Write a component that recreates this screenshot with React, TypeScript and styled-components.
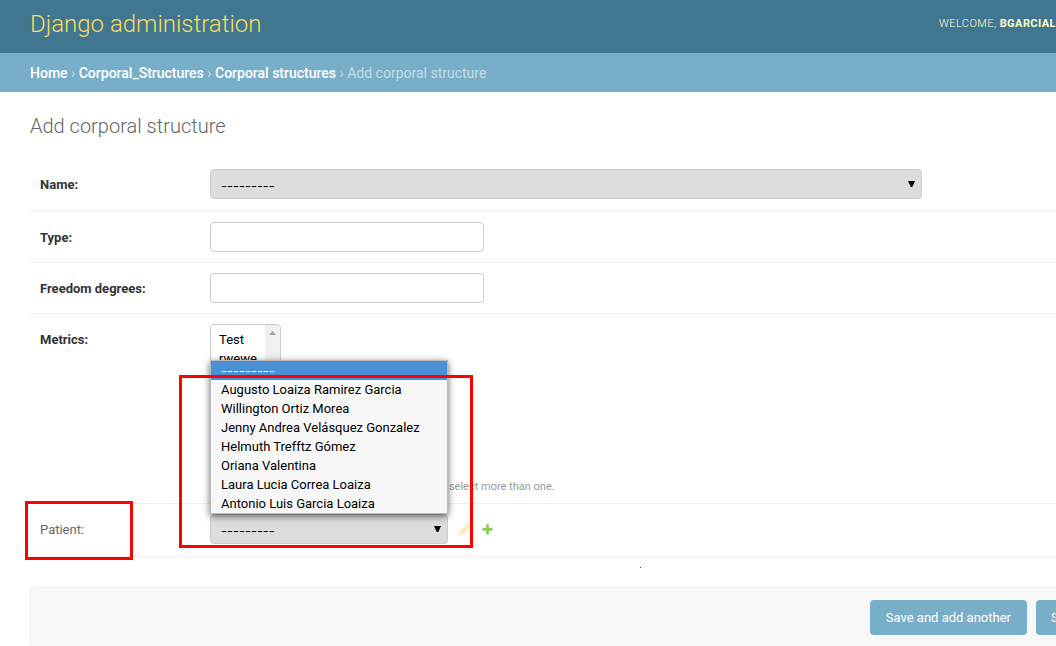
import React from 'react';
import styled, { createGlobalStyle, css } from 'styled-components';

const GlobalStyle = createGlobalStyle`
  *, *::before, *::after { box-sizing: border-box; }
  body {
    margin: 0;
    background: #fff;
    color: #333;
    font-family: Roboto, "Liberation Sans", sans-serif;
    font-size: 13px;
    line-height: 20px;
  }
`;

const Page = styled.div`
  overflow: hidden;
`;

const Header = styled.header`
  display: flex;
  align-items: center;
  justify-content: space-between;
  height: 53px;
  padding: 0 0 6px 30px;
  background: #417690;
  color: #ffc;
`;

const SiteName = styled.a`
  color: #f5dd5d;
  font-size: 24px;
  font-weight: 300;
  line-height: 28px;
  text-decoration: none;
`;

const UserTools = styled.div`
  font-size: 11px;
  font-weight: 300;
  letter-spacing: 0.04em;
  text-transform: uppercase;
  white-space: nowrap;
`;

const UserName = styled.strong`
  font-weight: 700;
`;

const Breadcrumbs = styled.nav`
  padding: 10px 30px 9px;
  background: #79aec8;
  color: #c4dce8;
  font-size: 14px;
`;

const Crumb = styled.a`
  color: #fff;
  font-weight: 500;
  text-decoration: none;
`;

const Content = styled.main`
  padding: 24px 0 0 30px;
`;

const Title = styled.h1`
  margin: 0 0 23px;
  color: #666;
  font-size: 20px;
  font-weight: 300;
  line-height: 20px;
`;

const Row = styled.div<{ $tall?: boolean }>`
  position: relative;
  display: flex;
  align-items: flex-start;
  padding: 10px 0 ${(p) => (p.$tall ? 12 : 10)}px 10px;
  border-bottom: 1px solid #eee;
`;

const Label = styled.label<{ $optional?: boolean }>`
  flex: 0 0 170px;
  padding-top: 6px;
  color: ${(p) => (p.$optional ? '#666' : '#333')};
  font-weight: ${(p) => (p.$optional ? 400 : 700)};
`;

const field = css`
  height: 30px;
  border: 1px solid #ccc;
  border-radius: 4px;
  color: #000;
  font: inherit;
`;

const TextInput = styled.input`
  ${field}
  width: 274px;
  padding: 5px 6px;
  background: #fff;
`;

const SelectBox = styled.div<{ $width: number }>`
  position: relative;
  flex: 0 1 ${(p) => p.$width}px;
`;

const Select = styled.select`
  ${field}
  display: block;
  width: 100%;
  padding: 4px 10px 0;
  appearance: none;
  background: #ddd;
  font-family: Inter, sans-serif;
`;

const Arrow = styled.svg`
  position: absolute;
  top: 12px;
  right: 7px;
  pointer-events: none;
`;

const Stack = styled.div`
  display: flex;
  flex-direction: column;
  align-items: flex-start;
`;

const ListFrame = styled.div`
  display: flex;
  width: 71px;
  height: 148px;
  overflow: hidden;
  border: 1px solid #ccc;
  border-radius: 4px;
`;

const MultiSelect = styled.select`
  flex: 1;
  min-width: 0;
  padding: 7px 6px;
  border: 0;
  background: #fff;
  color: #000;
  font: inherit;
  scrollbar-width: none;

  option {
    min-height: 19px;
    padding: 0 2px;
    line-height: 19px;
  }
`;

const ScrollTrack = styled.div`
  flex: 0 0 15px;
  padding: 5px 4px;
  background: #f0f0f0;
  line-height: 0;
`;

const Help = styled.p`
  margin: 8px 0 0;
  color: #999;
  font-size: 11px;
  line-height: 13px;
`;

const Menu = styled.ul`
  position: absolute;
  bottom: 100%;
  left: 0;
  width: 100%;
  margin: 0;
  padding: 0;
  border: 1px solid #bbb;
  background: #f7f7f7;
  box-shadow: 0 2px 7px rgba(0, 0, 0, 0.6);
  color: #000;
  list-style: none;
  z-index: 1;
`;

const MenuItem = styled.li<{ $active?: boolean }>`
  height: 19px;
  padding: 0 10px;
  background: ${(p) => (p.$active ? '#4a90d9' : 'transparent')};
  color: ${(p) => (p.$active ? '#fff' : '#000')};
  font-family: ${(p) => (p.$active ? 'Inter, sans-serif' : 'inherit')};
  line-height: ${(p) => (p.$active ? 21 : 19)}px;
  white-space: nowrap;
`;

const Related = styled.div`
  display: flex;
  gap: 10px;
  padding: 9px 0 0 10px;
`;

const IconLink = styled.a<{ $faded?: boolean }>`
  height: 13px;
  opacity: ${(p) => (p.$faded ? 0.3 : 0.8)};
  line-height: 0;
`;

const Highlight = styled.div<{ $x: number; $y: number; $w: number; $h: number }>`
  position: absolute;
  top: ${(p) => p.$y}px;
  left: ${(p) => p.$x}px;
  width: ${(p) => p.$w}px;
  height: ${(p) => p.$h}px;
  border: 3px solid #f00;
  pointer-events: none;
  z-index: 2;
`;

const Speck = styled.div`
  width: 1px;
  height: 1px;
  margin: 10px 0 19px 610px;
  background: #d00;
`;

const SubmitRow = styled.div`
  display: flex;
  justify-content: flex-end;
  gap: 9px;
  padding: 12px 0;
  border: 1px solid #eee;
  border-right: 0;
  border-radius: 4px 0 0 4px;
  background: #f8f8f8;
`;

const SubmitButton = styled.button<{ $cut?: boolean }>`
  width: ${(p) => (p.$cut ? '20px' : 'auto')};
  height: 35px;
  padding: ${(p) => (p.$cut ? '0 0 0 15px' : '0 16px')};
  overflow: hidden;
  border: 0;
  border-radius: ${(p) => (p.$cut ? '4px 0 0 4px' : '4px')};
  background: #79aec8;
  color: #fff;
  font: inherit;
  text-align: left;
  white-space: nowrap;
`;

const patients = [
  'Augusto Loaiza Ramirez Garcia',
  'Willington Ortiz Morea',
  'Jenny Andrea Velásquez Gonzalez',
  'Helmuth Trefftz Gómez',
  'Oriana Valentina',
  'Laura Lucia Correa Loaiza',
  'Antonio Luis Garcia Loaiza',
];

const DropDown = ({ id, width, children }: { id: string; width: number; children?: React.ReactNode }) => (
  <SelectBox $width={width}>
    <Select id={id}>
      <option>---------</option>
    </Select>
    <Arrow width="7" height="6" viewBox="0 0 7 6" aria-hidden="true">
      <path d="M0 0h7L4.2 6H2.8z" fill="#000" />
    </Arrow>
    {children}
  </SelectBox>
);

export default function App() {
  return (
    <Page>
      <GlobalStyle />
      <Header>
        <SiteName href="#">Django administration</SiteName>
        <UserTools>
          Welcome, <UserName>bgarcial</UserName>
        </UserTools>
      </Header>
      <Breadcrumbs>
        <Crumb href="#">Home</Crumb> › <Crumb href="#">Corporal_Structures</Crumb> ›{' '}
        <Crumb href="#">Corporal structures</Crumb> › Add corporal structure
      </Breadcrumbs>
      <Content>
        <Title>Add corporal structure</Title>
        <form onSubmit={(e) => e.preventDefault()}>
          <Row $tall>
            <Label htmlFor="name">Name:</Label>
            <DropDown id="name" width={712} />
          </Row>
          <Row>
            <Label htmlFor="type">Type:</Label>
            <TextInput id="type" type="text" />
          </Row>
          <Row>
            <Label htmlFor="freedom">Freedom degrees:</Label>
            <TextInput id="freedom" type="text" />
          </Row>
          <Row>
            <Label htmlFor="metrics">Metrics:</Label>
            <Stack>
              <ListFrame>
                <MultiSelect id="metrics" multiple>
                  <option>Test</option>
                  <option>rwewe</option>
                </MultiSelect>
                <ScrollTrack>
                  <svg width="7" height="6" viewBox="0 0 7 6" aria-hidden="true">
                    <path d="M3.5 1L7 5H0z" fill="#a3a3a3" />
                  </svg>
                </ScrollTrack>
              </ListFrame>
              <Help>Hold down "Control", or "Command" on a Mac, to select more than one.</Help>
            </Stack>
          </Row>
          <Row $tall>
            <Label htmlFor="patient" $optional>
              Patient:
            </Label>
            <DropDown id="patient" width={238}>
              <Menu role="listbox" aria-label="Patient">
                <MenuItem role="option" aria-selected="true" $active>
                  ---------
                </MenuItem>
                {patients.map((name) => (
                  <MenuItem key={name} role="option" aria-selected="false">
                    {name}
                  </MenuItem>
                ))}
              </Menu>
            </DropDown>
            <Related>
              <IconLink href="#" aria-label="Change patient" $faded>
                <svg width="13" height="13" viewBox="0 0 1792 1792">
                  <path
                    fill="#efb80b"
                    d="M491 1536l91-91-235-235-91 91v107h128v128h107zm523-928q0-22-22-22-10 0-17 7l-542 542q-7 7-7 17 0 22 22 22 10 0 17-7l542-542q7-7 7-17zm-54-192l416 416-832 832h-416v-416zm683 96q0 53-37 90l-166 166-416-416 166-165q36-38 90-38 53 0 91 38l235 234q37 39 37 91z"
                  />
                </svg>
              </IconLink>
              <IconLink href="#" aria-label="Add patient">
                <svg width="13" height="13" viewBox="0 0 1792 1792">
                  <path
                    fill="#70bf2b"
                    d="M1600 796v192q0 40-28 68t-68 28h-416v416q0 40-28 68t-68 28h-192q-40 0-68-28t-28-68v-416h-416q-40 0-68-28t-28-68v-192q0-40 28-68t68-28h416v-416q0-40 28-68t68-28h192q40 0 68 28t28 68v416h416q40 0 68 28t28 68z"
                  />
                </svg>
              </IconLink>
            </Related>
            <Highlight $x={-5} $y={-3} $w={108} $h={59} />
            <Highlight $x={149} $y={-129} $w={294} $h={173} />
          </Row>
          <Speck />
          <SubmitRow>
            <SubmitButton type="submit">Save and add another</SubmitButton>
            <SubmitButton type="submit" $cut>
              S
            </SubmitButton>
          </SubmitRow>
        </form>
      </Content>
    </Page>
  );
}
